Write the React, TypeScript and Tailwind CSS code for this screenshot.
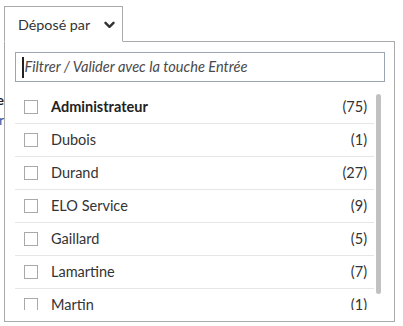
import React from "react";

const rows: { name: string; count: number; bold?: boolean }[] = [
  { name: "Administrateur", count: 75, bold: true },
  { name: "Dubois", count: 1 },
  { name: "Durand", count: 27 },
  { name: "ELO Service", count: 9 },
  { name: "Gaillard", count: 5 },
  { name: "Lamartine", count: 7 },
  { name: "Martin", count: 1 },
];

export default function App() {
  return (
    <div
      className="relative w-[403px] h-[326px] bg-white overflow-hidden text-[#333]"
      style={{ fontFamily: "Lato, 'Noto Sans', sans-serif" }}
    >
      {/* background content peeking out on the left */}
      <div className="absolute left-0 top-[90px] w-[4px] overflow-hidden">
        <div className="flex flex-col items-end w-[40px] -ml-[36px] text-[14px] leading-[20px]">
          <span className="font-bold text-[#222]">e</span>
          <span className="text-[#1f5fa8]">
            <span className="text-[#c46a1a]">e</span>r
          </span>
        </div>
      </div>

      <div className="pt-[6px] pl-[4px] flex flex-col items-start">
        {/* tab */}
        <div className="relative z-10 -mb-px flex items-center h-[36px] w-[119px] bg-white border border-[#aaaaaa] border-b-white pl-[13px] pr-[6px] pt-[2px]">
          <span className="text-[14.3px]">Déposé par</span>
          <svg
            className="ml-auto mr-[1px]"
            width="11"
            height="8"
            viewBox="0 0 11 8"
            fill="none"
          >
            <path
              d="M1.5 1.8 L5.5 5.8 L9.5 1.8"
              stroke="#333"
              strokeWidth="2.4"
              strokeLinecap="round"
              strokeLinejoin="round"
            />
          </svg>
        </div>

        {/* panel */}
        <div className="w-[391px] h-[281px] bg-white border border-[#aaaaaa] pt-[10px] pl-[10px] pr-[9px] pb-[11px] flex flex-col">
          <div className="flex items-center h-[30px] w-[370px] border border-[#9aa6b2] pl-[6px]">
            <div className="w-[1.5px] h-[21px] bg-[#222] mr-[1px]" />
            <span className="italic text-[14.6px] text-[#4a4a4a]">
              Filtrer / Valider avec la touche Entrée
            </span>
          </div>

          <div className="mt-[9px] flex h-[219px] overflow-hidden">
            <div className="w-[359px] flex flex-col">
              {rows.map((r) => (
                <div
                  key={r.name}
                  className="flex items-center shrink-0 h-[33px] border-b border-[#e6e6e6] pl-[9px] pr-[7px]"
                >
                  <div className="w-[14px] h-[14px] border border-[#a9a9a9] bg-white shrink-0" />
                  <span
                    className={`ml-[13px] text-[14.5px] ${r.bold ? "font-bold text-[14.2px] text-[#222]" : ""}`}
                  >
                    {r.name}
                  </span>
                  <span className="ml-auto text-[14.5px]">({r.count})</span>
                </div>
              ))}
            </div>
            <div className="ml-[2px] mt-[3px] w-[5px] h-[200px] rounded-full bg-[#c1c1c1]" />
          </div>
        </div>
      </div>
    </div>
  );
}
